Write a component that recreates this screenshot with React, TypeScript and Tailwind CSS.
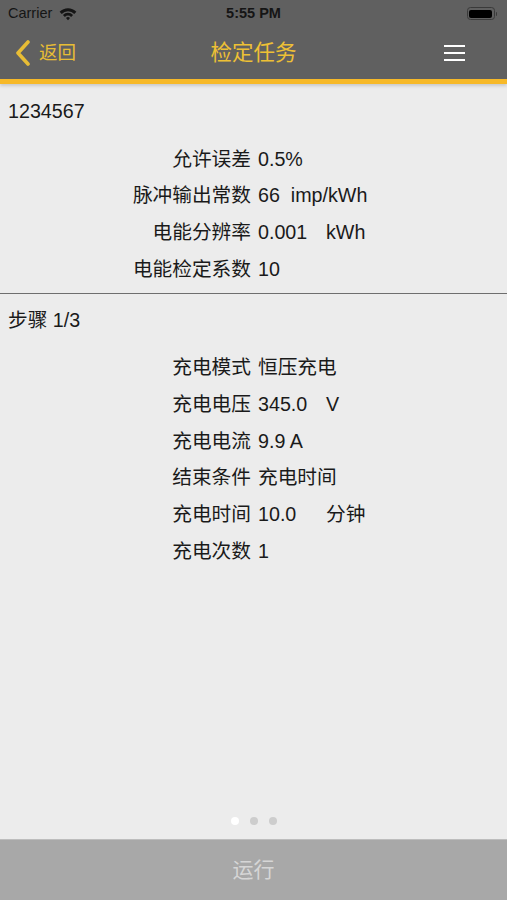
import React from 'react'

const font = { fontFamily: '"Liberation Sans", "Noto Sans CJK SC", sans-serif' }

type Row = { label: string; value: string; unit?: string }

const section1: Row[] = [
  { label: '允许误差', value: '0.5%' },
  { label: '脉冲输出常数', value: '66  imp/kWh' },
  { label: '电能分辨率', value: '0.001', unit: 'kWh' },
  { label: '电能检定系数', value: '10' },
]

const section2: Row[] = [
  { label: '充电模式', value: '恒压充电' },
  { label: '充电电压', value: '345.0', unit: 'V' },
  { label: '充电电流', value: '9.9 A' },
  { label: '结束条件', value: '充电时间' },
  { label: '充电时间', value: '10.0', unit: '分钟' },
  { label: '充电次数', value: '1' },
]

function Rows({ rows }: { rows: Row[] }) {
  return (
    <div className="mt-[17px]">
      {rows.map((row) => (
        <div key={row.label} className="flex h-[36.7px] items-center text-[19.7px] text-[#1a1a1a]">
          <span className="w-[251px] text-right">{row.label}</span>
          {row.unit ? (
            <>
              <span className="ml-[7px] w-[68px]">{row.value}</span>
              <span>{row.unit}</span>
            </>
          ) : (
            <span className="ml-[7px] whitespace-pre">{row.value}</span>
          )}
        </div>
      ))}
    </div>
  )
}

export default function App() {
  return (
    <div className="flex h-[900px] flex-col overflow-hidden bg-[#ececec]" style={font}>
      <div className="relative z-10 bg-[#606060] shadow-[0_2px_3px_rgba(0,0,0,0.15)]">
        <div className="relative flex h-[27px] items-center px-[8px] text-[14.5px] text-[#151515]">
          <span>Carrier</span>
          <svg className="ml-[7px]" width="18" height="14" viewBox="0 0 17 13">
            <path d="M0.6 4.4 A11 11 0 0 1 16.4 4.4 L14.4 6.4 A8.1 8.1 0 0 0 2.6 6.4 Z" fill="#151515" />
            <path d="M3.7 7.4 A6.6 6.6 0 0 1 13.3 7.4 L11.4 9.3 A3.9 3.9 0 0 0 5.6 9.3 Z" fill="#151515" />
            <path d="M6.6 10.3 A2.6 2.6 0 0 1 10.4 10.3 L8.5 12.4 Z" fill="#151515" />
          </svg>
          <span className="absolute left-1/2 -translate-x-1/2 font-bold">5:55 PM</span>
          <div className="ml-auto mr-[2px] flex items-center">
            <div className="flex h-[13px] w-[28px] items-center rounded-[3.5px] border border-[#3a3a3a] p-[1.5px]">
              <div className="h-full w-full rounded-[2px] bg-black" />
            </div>
            <div className="ml-[1px] h-[4px] w-[1.5px] rounded-r-sm bg-[#3a3a3a]" />
          </div>
        </div>
        <div className="relative flex h-[52px] items-center px-[15px]">
          <svg width="16" height="26" viewBox="0 0 16 26">
            <path d="M13 2 L3 13 L13 24" fill="none" stroke="#e8bd35" strokeWidth="3.6" strokeLinecap="round" strokeLinejoin="round" />
          </svg>
          <span className="ml-[8px] text-[18.5px] text-[#e8bd35]">返回</span>
          <span className="absolute left-1/2 -translate-x-1/2 text-[21.5px] text-[#eec035]">检定任务</span>
          <div className="ml-auto mr-[27px] flex flex-col gap-[5px]">
            <div className="h-[2px] w-[21px] bg-white" />
            <div className="h-[2px] w-[21px] bg-white" />
            <div className="h-[2px] w-[21px] bg-white" />
          </div>
        </div>
        <div className="h-[5px] bg-[#f7b928]" />
      </div>

      <div className="flex-1">
        <div className="pt-[14px] pb-[5px]">
          <div className="px-[8px] text-[19.7px] leading-[26px] text-[#1a1a1a]">1234567</div>
          <Rows rows={section1} />
        </div>
        <div className="h-px bg-[#6e6e6e]" />
        <div className="pt-[13px]">
          <div className="px-[8px] text-[19.7px] leading-[26px] text-[#1a1a1a]">步骤 1/3</div>
          <Rows rows={section2} />
        </div>
      </div>

      <div className="flex h-[37px] items-center justify-center gap-[11px]">
        <div className="h-[8px] w-[8px] rounded-full bg-white" />
        <div className="h-[8px] w-[8px] rounded-full bg-[#cdcdcd]" />
        <div className="h-[8px] w-[8px] rounded-full bg-[#cdcdcd]" />
      </div>

      <div className="flex h-[61px] items-center justify-center border-t border-[#bdbdbd] bg-[#a8a8a8] text-[21px] text-[#d6d6d6]">
        运行
      </div>
    </div>
  )
}
